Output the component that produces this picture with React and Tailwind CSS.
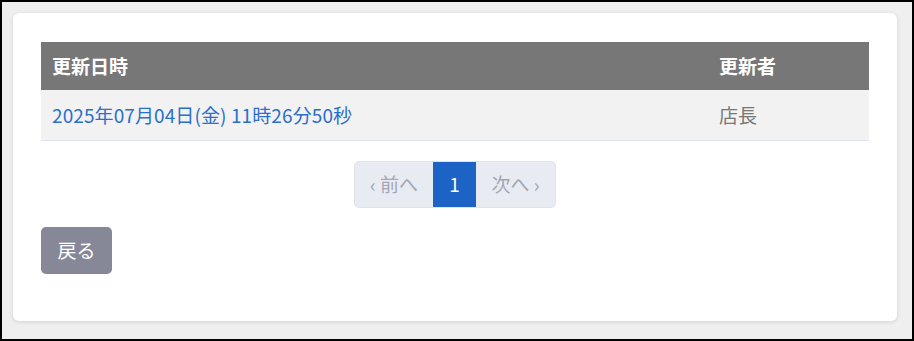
export default function App() {
  return (
    <div
      className="w-[914px] h-[341px] border-2 border-black bg-[#efefef] pl-[11px] pt-[11px]"
      style={{ fontFamily: '"Noto Sans CJK JP", "Noto Sans", sans-serif' }}
    >
      <div className="w-[884px] h-[308px] rounded-[6px] bg-white shadow-[0_1px_4px_rgba(0,0,0,0.12)] px-[28px] pt-[29px]">
        <table className="w-full border-collapse text-[19px]">
          <thead>
            <tr className="bg-[#777777] text-white h-[48px]">
              <th className="text-left font-bold pl-[11px]">更新日時</th>
              <th className="text-left font-bold w-[150px]">更新者</th>
            </tr>
          </thead>
          <tbody>
            <tr className="bg-[#f2f2f2] h-[50px] border-b border-[#dfe5ee]">
              <td className="pl-[11px] text-[#2a6fcc] tracking-[0.1px]">2025年07月04日(金) 11時26分50秒</td>
              <td className="text-[#777777]">店長</td>
            </tr>
          </tbody>
        </table>

        <div className="flex justify-center mt-[20px]">
          <div className="flex h-[47px] rounded-[5px] border border-[#e0e3ec] bg-[#e9ebf3] text-[19px] overflow-hidden">
            <span className="w-[78px] flex items-center justify-center text-[#a3a7b3]">‹ 前へ</span>
            <span className="w-[43px] flex items-center justify-center bg-[#1c63c5] text-white">1</span>
            <span className="w-[79px] flex items-center justify-center text-[#a3a7b3]">次へ ›</span>
          </div>
        </div>

        <button className="mt-[19px] w-[71px] h-[47px] rounded-[5px] bg-[#868797] text-white text-[19px]">
          戻る
        </button>
      </div>
    </div>
  );
}
